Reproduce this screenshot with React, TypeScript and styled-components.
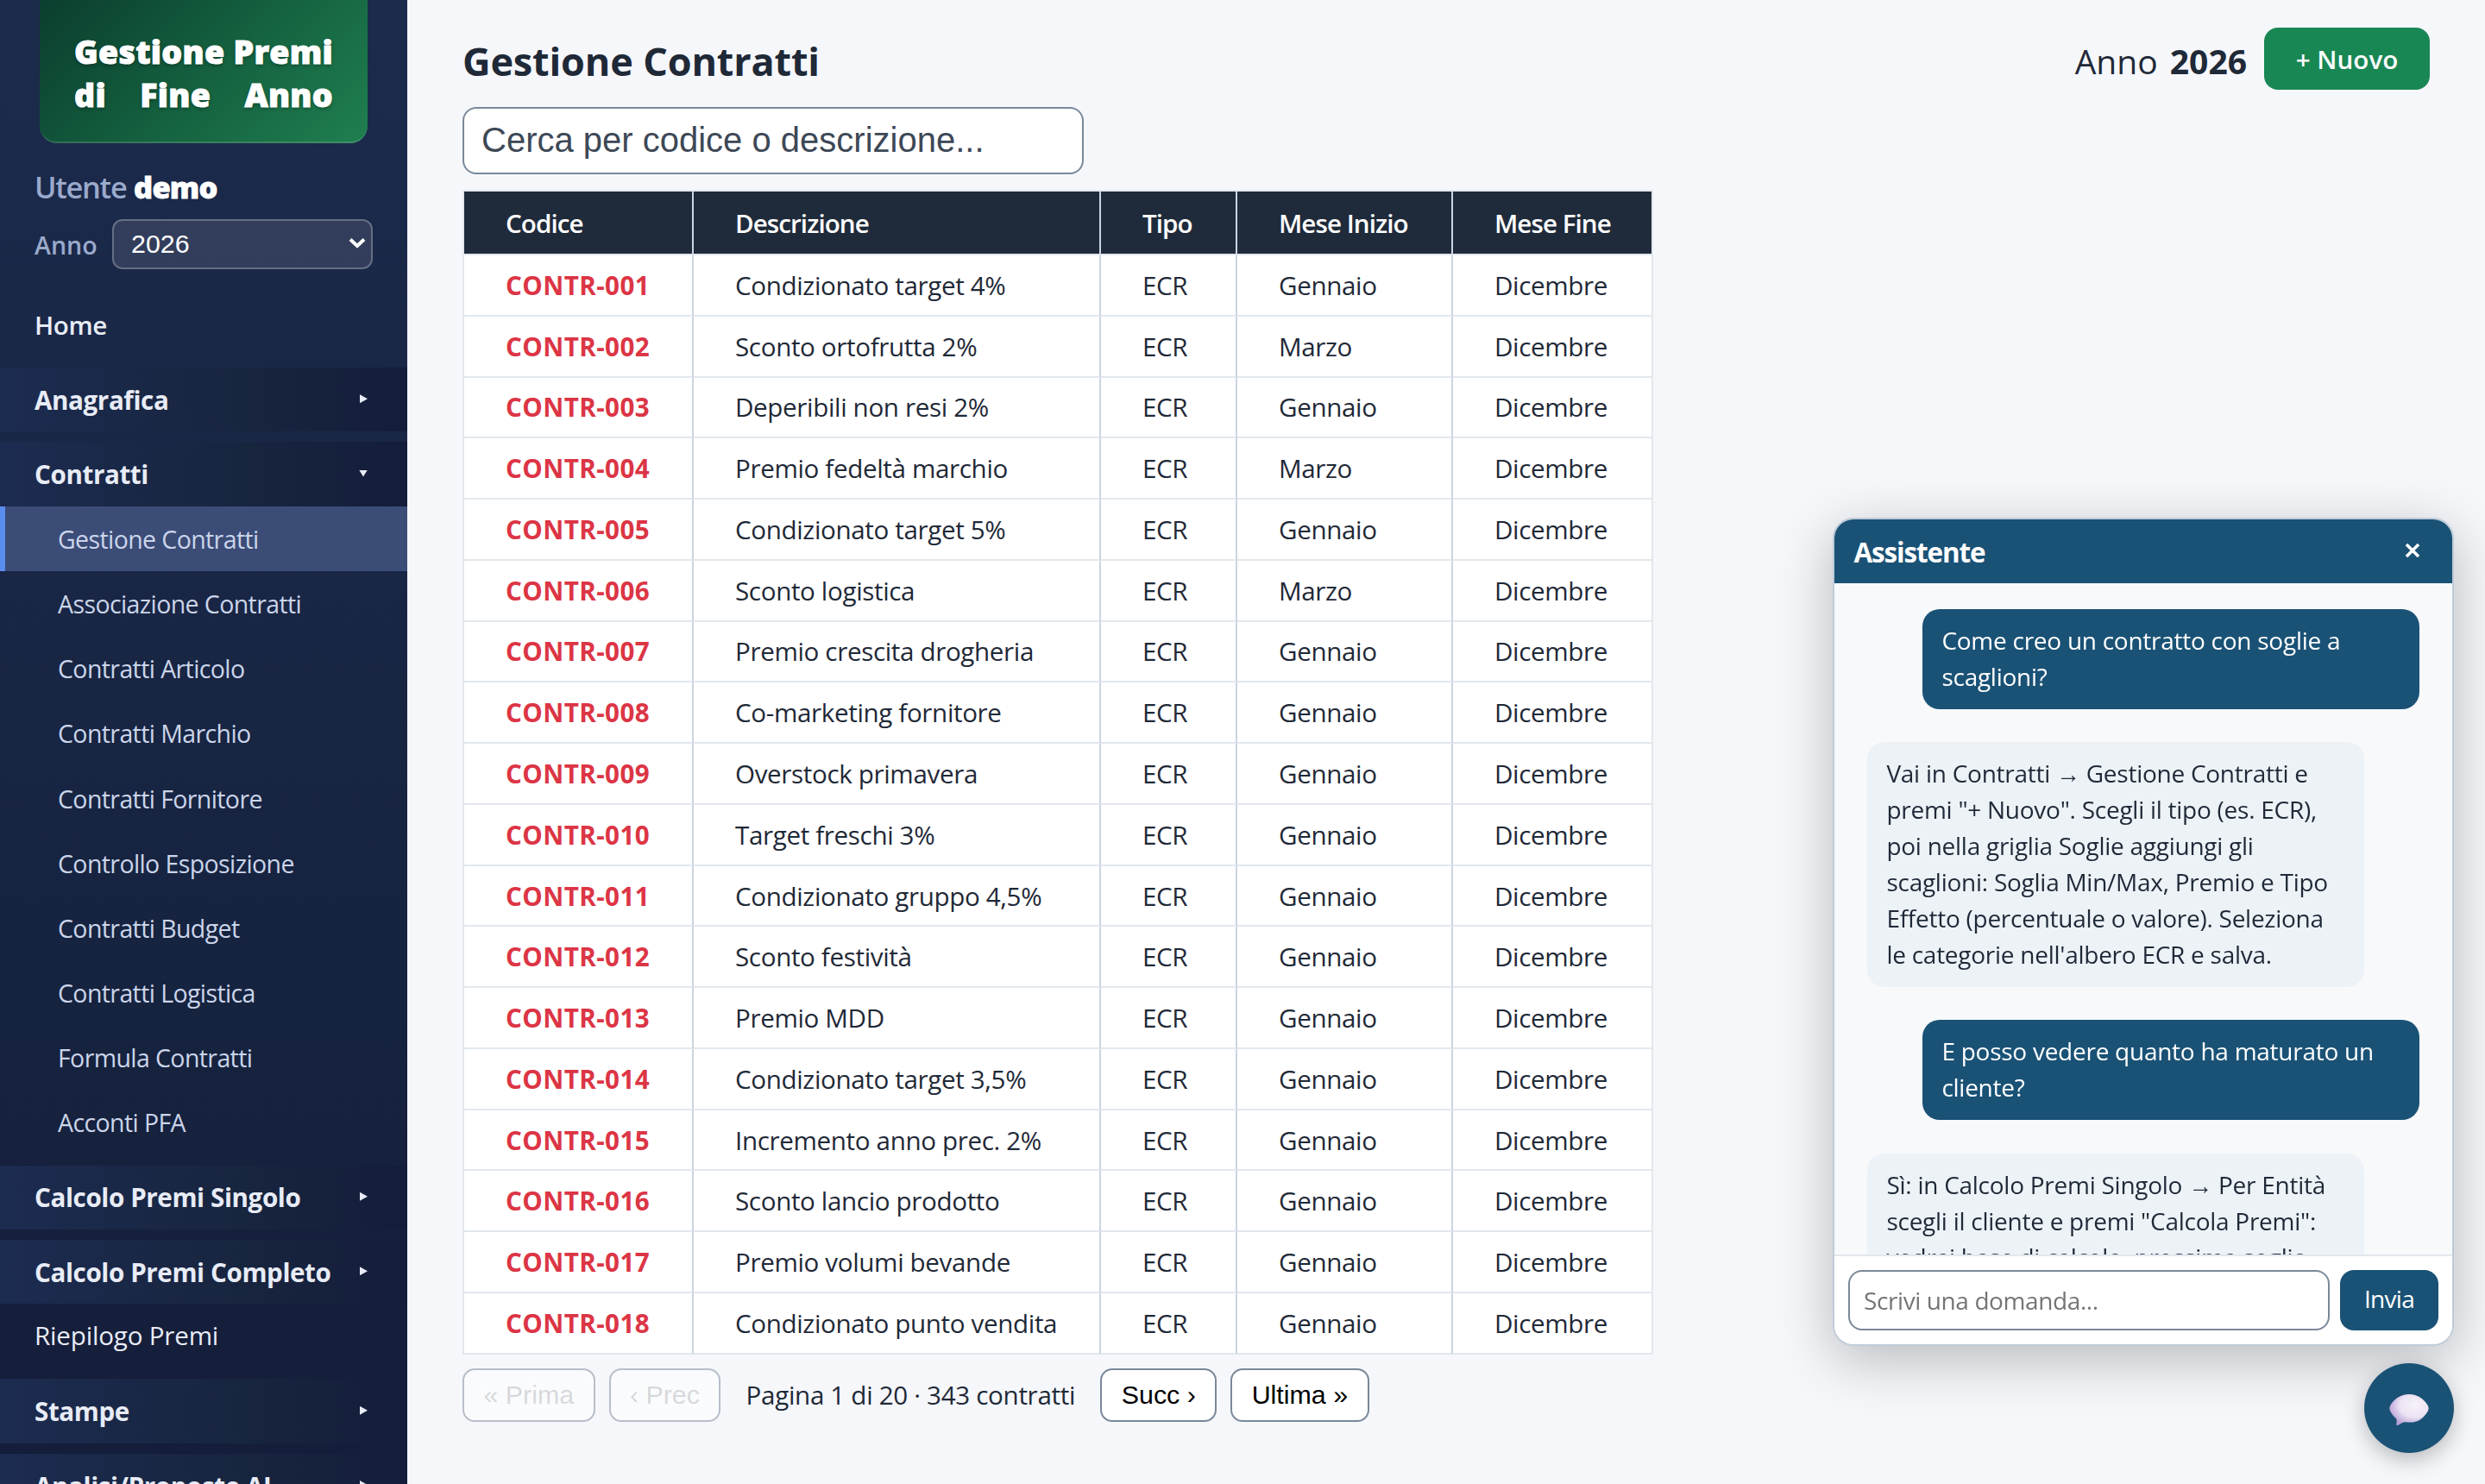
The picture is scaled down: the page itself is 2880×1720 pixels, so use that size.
import React from "react";
import styled, { createGlobalStyle } from "styled-components";

const UI = `"Open Sans", "Noto Sans", sans-serif`;
const ARIAL = `"Liberation Sans", Arial, sans-serif`;

type Group = {
  label: string;
  open?: boolean;
  plain?: boolean;
  items?: string[];
}

const menu: Group[] = [
  { label: "Anagrafica" },
  {
    label: "Contratti",
    open: true,
    items: [
      "Gestione Contratti",
      "Associazione Contratti",
      "Contratti Articolo",
      "Contratti Marchio",
      "Contratti Fornitore",
      "Controllo Esposizione",
      "Contratti Budget",
      "Contratti Logistica",
      "Formula Contratti",
      "Acconti PFA",
    ],
  },
  { label: "Calcolo Premi Singolo" },
  { label: "Calcolo Premi Completo" },
  { label: "Riepilogo Premi", plain: true },
  { label: "Stampe" },
  { label: "Analisi/Proposte AI" },
];

const contracts: [string, string][] = [
  ["Condizionato target 4%", "Gennaio"],
  ["Sconto ortofrutta 2%", "Marzo"],
  ["Deperibili non resi 2%", "Gennaio"],
  ["Premio fedeltà marchio", "Marzo"],
  ["Condizionato target 5%", "Gennaio"],
  ["Sconto logistica", "Marzo"],
  ["Premio crescita drogheria", "Gennaio"],
  ["Co-marketing fornitore", "Gennaio"],
  ["Overstock primavera", "Gennaio"],
  ["Target freschi 3%", "Gennaio"],
  ["Condizionato gruppo 4,5%", "Gennaio"],
  ["Sconto festività", "Gennaio"],
  ["Premio MDD", "Gennaio"],
  ["Condizionato target 3,5%", "Gennaio"],
  ["Incremento anno prec. 2%", "Gennaio"],
  ["Sconto lancio prodotto", "Gennaio"],
  ["Premio volumi bevande", "Gennaio"],
  ["Condizionato punto vendita", "Gennaio"],
];

const messages = [
  { mine: true, lines: ["Come creo un contratto con soglie a", "scaglioni?"] },
  {
    mine: false,
    lines: [
      "Vai in Contratti → Gestione Contratti e",
      "premi \"+ Nuovo\". Scegli il tipo (es. ECR),",
      "poi nella griglia Soglie aggiungi gli",
      "scaglioni: Soglia Min/Max, Premio e Tipo",
      "Effetto (percentuale o valore). Seleziona",
      "le categorie nell'albero ECR e salva.",
    ],
  },
  { mine: true, lines: ["E posso vedere quanto ha maturato un", "cliente?"] },
  {
    mine: false,
    lines: [
      "Sì: in Calcolo Premi Singolo → Per Entità",
      "scegli il cliente e premi \"Calcola Premi\":",
      "vedrai base di calcolo, prossima soglia",
    ],
  },
];

const App: React.FC = () => (
  <>
    <GlobalStyle />
    <SPage>
      <SSidebar>
        <SBrand>
          <span>Gestione Premi</span>
          <span>di Fine Anno</span>
        </SBrand>
        <SUser>Utente <b>demo</b></SUser>
        <SYear>
          Anno
          <SSelect>
            2026
            <svg width="20" height="14" viewBox="0 0 20 14" fill="none" stroke="#fff" strokeWidth="4">
              <path d="M2 2.5 L10 10 L18 2.5" />
            </svg>
          </SSelect>
        </SYear>
        <SHome>Home</SHome>
        {menu.map((group) => (
          <React.Fragment key={group.label}>
            {group.plain ? (
              <SPlain>{group.label}</SPlain>
            ) : (
              <SGroup>
                {group.label}
                <SArrow $open={group.open} />
              </SGroup>
            )}
            {group.items?.map((item, i) => (
              <SItem key={item} $active={i === 0}>{item}</SItem>
            ))}
          </React.Fragment>
        ))}
      </SSidebar>

      <SMain>
        <STopbar>
          <STitle>Gestione Contratti</STitle>
          <SCurrent>Anno <b>2026</b></SCurrent>
          <SNew>+ Nuovo</SNew>
        </STopbar>
        <SSearch placeholder="Cerca per codice o descrizione..." />
        <STable>
          <colgroup>
            <col width="266" />
            <col width="472" />
            <col width="158" />
            <col width="250" />
            <col width="232" />
          </colgroup>
          <thead>
            <tr>
              <th>Codice</th>
              <th>Descrizione</th>
              <th>Tipo</th>
              <th>Mese Inizio</th>
              <th>Mese Fine</th>
            </tr>
          </thead>
          <tbody>
            {contracts.map(([name, start], i) => (
              <tr key={name}>
                <SCode>CONTR-{String(i + 1).padStart(3, "0")}</SCode>
                <td>{name}</td>
                <td>ECR</td>
                <td>{start}</td>
                <td>Dicembre</td>
              </tr>
            ))}
          </tbody>
        </STable>
        <SPager>
          <SPageButton disabled>« Prima</SPageButton>
          <SPageButton disabled>‹ Prec</SPageButton>
          <SPageInfo>Pagina 1 di 20 · 343 contratti</SPageInfo>
          <SPageButton>Succ ›</SPageButton>
          <SPageButton>Ultima »</SPageButton>
        </SPager>
      </SMain>

      <SChat>
        <SChatHeader>
          Assistente
          <svg width="18" height="18" viewBox="0 0 18 18" fill="none" stroke="#fff" strokeWidth="3.6">
            <path d="M2 2 L16 16 M16 2 L2 16" />
          </svg>
        </SChatHeader>
        <SChatBody>
          {messages.map((message) => (
            <SBubble key={message.lines[0]} $mine={message.mine}>
              {message.lines.map((line) => <div key={line}>{line}</div>)}
            </SBubble>
          ))}
        </SChatBody>
        <SChatFooter>
          <SAsk placeholder="Scrivi una domanda..." />
          <SSend>Invia</SSend>
        </SChatFooter>
      </SChat>
      <SFab>
        <svg width="48" height="38" viewBox="0 0 48 38">
          <defs>
            <radialGradient id="balloon" cx="0.64" cy="0.36" r="0.68">
              <stop offset="0" stopColor="#f7f3fa" />
              <stop offset="0.55" stopColor="#ece3f4" />
              <stop offset="1" stopColor="#b7a0d6" />
            </radialGradient>
          </defs>
          <path
            fill="url(#balloon)"
            d="M24 1 C34 1 41.5 6.5 46 14.5 Q47.6 17.4 46 20.2 C41 29 34.5 33.6 25 33.6 C22 33.6 20 33 17.8 33.4 C14.5 34.2 12.5 36.6 10.2 37 C9.2 37 9.1 36.2 9.4 35 C10.1 32 9.6 30 8.4 28.4 C5.8 26.2 3.6 23.4 2 20.2 Q0.4 17.4 2 14.5 C6.5 6.5 14 1 24 1 Z"
          />
        </svg>
      </SFab>
    </SPage>
  </>
)

const GlobalStyle = createGlobalStyle`
  * {
    box-sizing: border-box;
  }
  body {
    margin: 0;
    overflow: hidden;
    background: #f5f7fb;
    color: #1f2937;
    font-family: ${UI};
    font-size: 29.6px;
  }
  button, input {
    margin: 0;
    outline: none;
  }
`;

const SPage = styled.div`
  display: flex;
  width: 2880px;
  height: 1720px;
  overflow: hidden;
`;

const SSidebar = styled.aside`
  width: 472px;
  height: 1720px;
  flex: none;
  overflow: hidden;
  color: #e8ecf6;
  background: linear-gradient(180deg, #1c2a4c 0%, #16233f 70%, #151e3a 90%, #141d39 100%);
`;

const SBrand = styled.div`
  width: 380px;
  height: 166px;
  margin: 0 46px;
  padding: 35px 40px 0;
  border-radius: 0 0 20px 20px;
  border-bottom: 2px solid rgba(255,255,255,0.15);
  background: linear-gradient(135deg, #0b3d2e 0%, #14603f 50%, #1f7f4f 100%);
  background-origin: border-box;
  color: #fff;
  font-size: 37.5px;
  font-weight: 800;
  line-height: 50px;
  letter-spacing: 0.3px;
  text-shadow: 0 2px 4px rgba(0,0,0,0.35);
  -webkit-text-stroke: 1px #fff;
  span {
    display: block;
    text-align-last: justify;
    white-space: nowrap;
  }
`;

const SUser = styled.div`
  margin-top: 28px;
  padding-left: 40px;
  height: 48px;
  line-height: 46px;
  color: #9aaacc;
  font-size: 34.4px;
  font-weight: 600;
  letter-spacing: -1.3px;
  b {
    margin-left: 1px;
    color: #fff;
    font-weight: 800;
    letter-spacing: -0.8px;
    -webkit-text-stroke: 0.8px #fff;
  }
`;

const SYear = styled.div`
  display: flex;
  align-items: center;
  justify-content: space-between;
  margin: 12px 40px 0;
  color: #9aaacc;
  font-size: 28.6px;
  font-weight: 600;
`;

const SSelect = styled.div`
  display: flex;
  align-items: center;
  justify-content: space-between;
  width: 302px;
  height: 58px;
  padding: 0 6px 2px 20px;
  border: 2px solid rgba(255,255,255,0.25);
  border-radius: 12px;
  background: rgba(255,255,255,0.1);
  color: #fff;
  font-family: ${ARIAL};
  font-size: 30.4px;
  font-weight: 400;
`;

const SHome = styled.div`
  height: 75px;
  margin-top: 27px;
  padding-left: 40px;
  line-height: 75px;
  font-weight: 600;
  letter-spacing: -0.4px;
`;

const SGroup = styled.div`
  display: flex;
  align-items: center;
  justify-content: space-between;
  height: 74.4px;
  margin-top: 12px;
  padding: 0 46px 0 40px;
  background: linear-gradient(90deg, #1c2b50 0%, #18253f 60%, #141d3a 100%);
  font-weight: 700;
  letter-spacing: -0.4px;
  white-space: nowrap;
`;

const SArrow = styled.i<{ $open?: boolean }>`
  width: ${({ $open }) => ($open ? 10 : 9)}px;
  height: ${({ $open }) => ($open ? 8 : 10)}px;
  margin-bottom: 2px;
  background: currentColor;
  clip-path: ${({ $open }) => ($open ? "polygon(0 0, 100% 0, 50% 100%)" : "polygon(0 0, 100% 50%, 0 100%)")};
`;

const SPlain = styled.div`
  height: 75px;
  padding-left: 40px;
  line-height: 74px;
  letter-spacing: -0.2px;
`;

const SItem = styled.div<{ $active?: boolean }>`
  height: 75.2px;
  padding-left: ${({ $active }) => ($active ? 61 : 67)}px;
  border-left: ${({ $active }) => ($active ? "6px solid #5b8def" : "none")};
  background: ${({ $active }) => ($active ? "#3b4c77" : "transparent")};
  color: #cbd5ea;
  font-size: 28.5px;
  letter-spacing: -0.6px;
  line-height: 76px;
  white-space: nowrap;
`;

const SMain = styled.main`
  flex: 1;
  padding: 32px 64px 0;
`;

const STopbar = styled.div`
  display: flex;
  align-items: center;
  height: 72px;
`;

const STitle = styled.h1`
  flex: 1;
  margin: 0;
  padding-top: 4px;
  font-size: 45px;
  font-weight: 700;
  letter-spacing: -0.15px;
`;

const SCurrent = styled.div`
  margin-right: 20px;
  padding-top: 4px;
  font-size: 39px;
  b {
    margin-left: 4px;
  }
`;

const SNew = styled.button`
  width: 192px;
  height: 72px;
  border: none;
  border-radius: 16px;
  background: #198754;
  color: #fff;
  font-family: ${UI};
  font-size: 29.6px;
  font-weight: 600;
`;

const SSearch = styled.input`
  display: block;
  width: 720px;
  height: 78px;
  margin-top: 20px;
  padding: 0 20px 1px;
  border: 2px solid #7a8899;
  border-radius: 16px;
  background: #fff;
  font-family: ${ARIAL};
  font-size: 40px;
  &::placeholder {
    color: #3d4856;
    opacity: 1;
  }
`;

const STable = styled.table`
  width: 1380px;
  margin-top: 18px;
  table-layout: fixed;
  border-spacing: 0;
  border-left: 2px solid #e2e8ee;
  border-top: 2px solid #e2e8ee;
  background: #fff;
  th, td {
    height: 70.78px;
    padding: 0 0 0 48px;
    border-right: 2px solid #cbd5e0;
    border-bottom: 2px solid #e2e8ee;
    letter-spacing: -0.36px;
    text-align: left;
    white-space: nowrap;
  }
  th {
    height: 74px;
    padding-top: 1px;
    background: #1f2b3b;
    color: #fff;
    font-weight: 600;
    letter-spacing: -0.95px;
  }
  th:last-child, td:last-child {
    border-right-color: #e2e8ee;
  }
  td:first-child {
    letter-spacing: 0.4px;
  }
`;

const SCode = styled.td`
  color: #dc3545;
  font-weight: 700;
`;

const SPager = styled.div`
  display: flex;
  align-items: center;
  gap: 16px;
  margin-top: 16px;
`;

const SPageButton = styled.button`
  height: 62px;
  padding: 0 22.4px;
  border: 2px solid #7a8899;
  border-radius: 14px;
  background: #fff;
  color: #000;
  font-family: ${ARIAL};
  font-size: 30.4px;
  white-space: nowrap;
  &:disabled {
    color: rgba(16,16,16,0.3);
    opacity: 0.5;
  }
`;

const SPageInfo = styled.span`
  width: 408px;
  letter-spacing: -0.32px;
  text-align: center;
  white-space: nowrap;
`;

// floating assistant, sits over the page
const SChat = styled.section`
  position: fixed;
  right: 36px;
  bottom: 160px;
  display: flex;
  flex-direction: column;
  width: 720px;
  height: 960px;
  overflow: hidden;
  border: 2px solid #bfccd9;
  border-radius: 24px;
  background: #fff;
  box-shadow: 0 16px 64px rgba(0,0,0,0.25);
`;

const SChatHeader = styled.header`
  display: flex;
  align-items: center;
  justify-content: space-between;
  flex: none;
  height: 74px;
  padding: 0 37px 0 22.4px;
  background: #1a5276;
  color: #fff;
  font-size: 31.4px;
  font-weight: 700;
  letter-spacing: -1.1px;
  svg {
    margin-bottom: 3px;
  }
`;

const SChatBody = styled.div`
  display: flex;
  flex: 1;
  flex-direction: column;
  gap: 38.2px;
  min-height: 0;
  overflow: hidden;
  padding: 30px 38px 0;
  background: #f7f9fb;
`;

const SBubble = styled.div<{ $mine: boolean }>`
  flex: none;
  width: 576px;
  padding: 15px 22.4px 17px;
  align-self: ${({ $mine }) => ($mine ? "flex-end" : "flex-start")};
  border-radius: 20px;
  background: ${({ $mine }) => ($mine ? "#1a5276" : "#edf2f7")};
  color: ${({ $mine }) => ($mine ? "#fff" : "#1f2937")};
  font-size: 28px;
  letter-spacing: -0.26px;
  line-height: 42px;
  white-space: nowrap;
`;

const SChatFooter = styled.footer`
  display: flex;
  flex: none;
  gap: 12px;
  height: 104px;
  padding: 16px;
  border-top: 2px solid #e2e8ee;
  background: #fff;
`;

const SAsk = styled.input`
  flex: 1;
  min-width: 0;
  height: 70px;
  padding: 0 16px;
  border: 2px solid #7a8899;
  border-radius: 16px;
  font-family: ${UI};
  font-size: 28px;
  letter-spacing: -0.4px;
  &::placeholder {
    color: #757575;
    opacity: 1;
  }
`;

const SSend = styled.button`
  width: 114px;
  height: 70px;
  padding: 0 0 4px;
  border: none;
  border-radius: 16px;
  background: #1a5276;
  color: #fff;
  font-family: ${UI};
  font-size: 28px;
  letter-spacing: -0.7px;
`;

const SFab = styled.button`
  position: fixed;
  right: 36px;
  bottom: 36px;
  display: flex;
  align-items: center;
  justify-content: center;
  width: 104px;
  height: 104px;
  padding: 4px 0 0;
  border: none;
  border-radius: 50%;
  background: #1a5276;
  box-shadow: 0 8px 24px rgba(0,0,0,0.25);
`;

export default App;
